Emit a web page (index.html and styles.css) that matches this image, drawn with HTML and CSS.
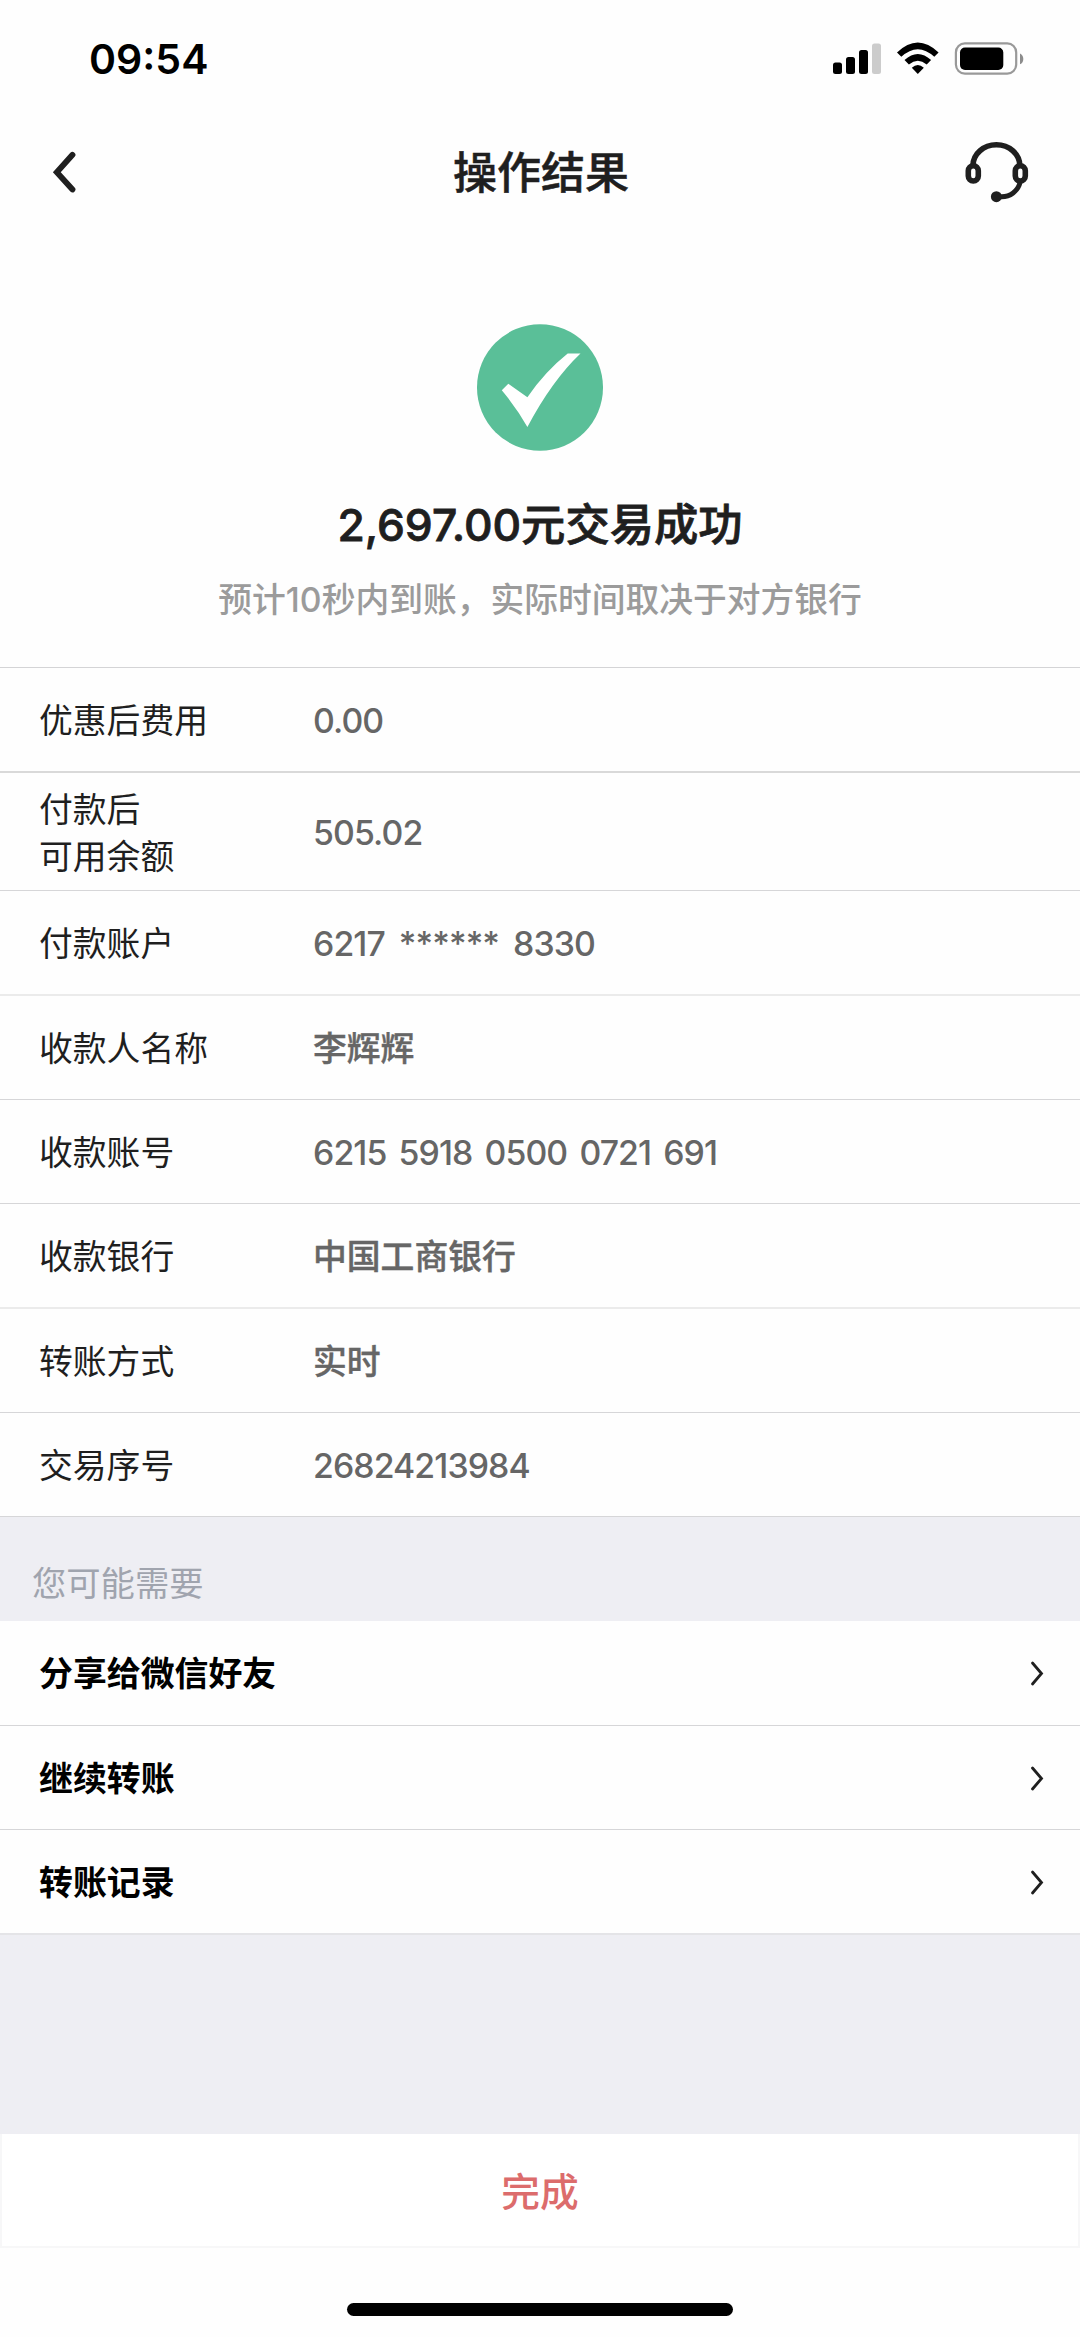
FILE: index.html
```html
<!DOCTYPE html>
<html lang="zh-CN">
<head>
<meta charset="utf-8">
<title>操作结果</title>
<link rel="stylesheet" href="styles.css">
</head>
<body>
<div class="screen">
  <header class="status">
    <span class="time">09:54</span>
    <svg class="status-icons" width="192" height="34" viewBox="832 42 192 34">
      <rect x="833" y="62.5" width="9" height="11.5" rx="2.5"/>
      <rect x="846" y="57" width="9" height="17" rx="2.5"/>
      <rect x="859" y="50" width="9" height="24" rx="2.5"/>
      <rect x="872" y="43.5" width="9" height="30.5" rx="2.5" fill="#ccc"/>
      <path d="M897 52.5Q917.8 32.500 938.600 52.500L934.300 56.800Q917.800 41.500 901.300 56.800Z"/>
      <path d="M904.500 60Q917.800 48 931.100 60L926.700 64.400Q917.800 57 908.900 64.400Z"/>
      <path d="M911.800 67.800Q917.800 62.400 923.800 67.800L917.800 74Z"/>
      <rect x="955.900" y="43.400" width="60.300" height="30.200" rx="9" fill="none" stroke="#999" stroke-width="2.200"/>
      <rect x="960" y="47.600" width="43.300" height="22.400" rx="5"/>
      <path d="M1020 53.500Q1023.300 55 1023.300 59T1020 64.300Z" fill="#8c8c8c"/>
    </svg>
  </header>
  <nav class="nav">
    <svg class="back" width="26" height="44" viewBox="52 150 26 44"><path d="M72.500 154.800L56.800 172.200L72.500 189.500" fill="none" stroke="#1f1f1f" stroke-width="5.800" stroke-linecap="round"/></svg>
    <h1 class="title">操作结果</h1>
    <svg class="service" width="66" height="64" viewBox="964 140 66 64" fill="none" stroke="#1f1f1f" stroke-width="5.600">
      <path d="M973 165.500A23.400 20.700 0 0 1 1019.800 165.500"/>
      <rect x="968.300" y="165.800" width="10" height="15.200" rx="5"/>
      <rect x="1015.300" y="165.800" width="10" height="15.200" rx="5"/>
      <path d="M1020 182.500C1018 191 1010 197 1001 196.700" stroke-width="5"/>
      <circle cx="996.400" cy="196.700" r="5.500" fill="#1f1f1f" stroke="none"/>
    </svg>
  </nav>
  <section class="result">
    <svg class="badge" width="126" height="127" viewBox="477 324.500 126 127">
      <ellipse cx="540" cy="388" rx="63" ry="63.200" fill="#5abf98"/>
      <path d="M501.800 390.700L508.300 384.300L527.400 397.700Q545 372 567.700 354L580.500 354Q552 381 527.400 427.500Q517 409 501.800 390.700Z" fill="#fff"/>
    </svg>
    <p class="amount">2,697.00元交易成功</p>
    <p class="hint">预计10秒内到账，实际时间取决于对方银行</p>
  </section>
  <dl class="details">
    <div class="row strong"><dt>优惠后费用</dt><dd>0.00</dd></div>
    <div class="row double"><dt>付款后<br>可用余额</dt><dd>505.02</dd></div>
    <div class="row soft"><dt>付款账户</dt><dd class="masked">6217 ****** 8330</dd></div>
    <div class="row"><dt>收款人名称</dt><dd class="cjk">李辉辉</dd></div>
    <div class="row"><dt>收款账号</dt><dd>6215 5918 0500 0721 691</dd></div>
    <div class="row soft"><dt>收款银行</dt><dd class="cjk">中国工商银行</dd></div>
    <div class="row"><dt>转账方式</dt><dd class="cjk">实时</dd></div>
    <div class="row"><dt>交易序号</dt><dd>26824213984</dd></div>
  </dl>
  <h2 class="group">您可能需要</h2>
  <ul class="links">
    <li class="link">分享给微信好友<svg class="chevron" width="14" height="28" viewBox="0 0 14 28"><path d="M2.500 3L11.500 13.500L2.500 24"/></svg></li>
    <li class="link">继续转账<svg class="chevron" width="14" height="28" viewBox="0 0 14 28"><path d="M2.500 3L11.500 13.500L2.500 24"/></svg></li>
    <li class="link">转账记录<svg class="chevron" width="14" height="28" viewBox="0 0 14 28"><path d="M2.500 3L11.500 13.500L2.500 24"/></svg></li>
  </ul>
  <button class="done">完成</button>
  <footer class="home"><span class="home-bar"></span></footer>
</div>
</body>
</html>
```
FILE: styles.css
```css
* { box-sizing: border-box; margin: 0; padding: 0; }
body {
  width: 1080px;
  background: #fefefe;
  font-family: Inter, "Noto Sans CJK SC", sans-serif;
  color: #1f1f1f;
}
.screen {
  display: flex;
  flex-direction: column;
  height: 2337px;
  background: #eeeef3;
}
.status {
  display: flex;
  justify-content: space-between;
  align-items: center;
  height: 118px;
  padding: 0 56px 0 89px;
  background: #fefefe;
}
.time { font-size: 41px; line-height: 50px; font-weight: 600; color: #000; }
.nav {
  display: grid;
  grid-template-columns: 1fr auto 1fr;
  align-items: center;
  height: 108px;
  padding: 0 50px 0 52px;
  background: #fefefe;
}
.title { padding-top: 2px; font-size: 44px; line-height: 60px; font-weight: 500; -webkit-text-stroke: 0.5px #1f1f1f; }
.service { justify-self: end; }
.result {
  display: flex;
  flex-direction: column;
  align-items: center;
  height: 441px;
  padding-top: 98px;
  background: #fefefe;
}
.amount { margin-top: 42px; font-size: 44.3px; line-height: 64px; font-weight: 500; -webkit-text-stroke: 0.8px #1f1f1f; }
.hint { margin-top: 18px; font-size: 33.75px; line-height: 50px; font-weight: 500; color: #9b9b9b; }
.details { border-top: 1px solid #d4d4d6; background: #fefefe; }
.row {
  display: grid;
  grid-template-columns: 274px 1fr;
  align-items: center;
  height: 104px;
  padding: 2px 0 0 39px;
  border-bottom: 1px solid #d6d6d8;
  font-size: 33.8px;
  line-height: 47px;
}
.strong { height: 105px; border-bottom: 2px solid #d9d9d9; }
.double { height: 118px; }
.soft { height: 105px; border-bottom: 2px solid #ebebeb; }
.row dd { font-weight: 500; color: #666; letter-spacing: -0.9px; word-spacing: 4px; }
.row .masked { word-spacing: 5.9px; }
.row .cjk { letter-spacing: 0; -webkit-text-stroke: 0.4px #666; }
.group {
  height: 104px;
  padding: 42px 0 0 32px;
  background: #eeeef3;
  font-size: 34.3px;
  line-height: 50px;
  font-weight: 400;
  color: #a0a4ae;
}
.links { list-style: none; background: #fefefe; }
.link {
  display: flex;
  justify-content: space-between;
  align-items: center;
  height: 105px;
  padding: 2px 36px 0 39px;
  border-bottom: 1px solid #d6d6d8;
  font-size: 33.9px;
  line-height: 50px;
  font-weight: 700;
  color: #000;
}
.link:nth-child(2) { height: 104px; }
.link:last-child { border-bottom: 2px solid #e4e4e7; }
.chevron { fill: none; stroke: #1f1f1f; stroke-width: 2.8; stroke-linecap: round; }
.done {
  height: 114px;
  margin-top: auto;
  padding-top: 4px;
  border: 2px solid #f7f7f8;
  border-top: 0;
  background: #fff;
  font: 500 38.7px/54px Inter, "Noto Sans CJK SC", sans-serif;
  color: #dc6c6c;
}
.home { display: flex; justify-content: center; height: 89px; padding-top: 55px; background: #fefefe; }
.home-bar { width: 386px; height: 13px; border-radius: 7px; background: #000; }
```
